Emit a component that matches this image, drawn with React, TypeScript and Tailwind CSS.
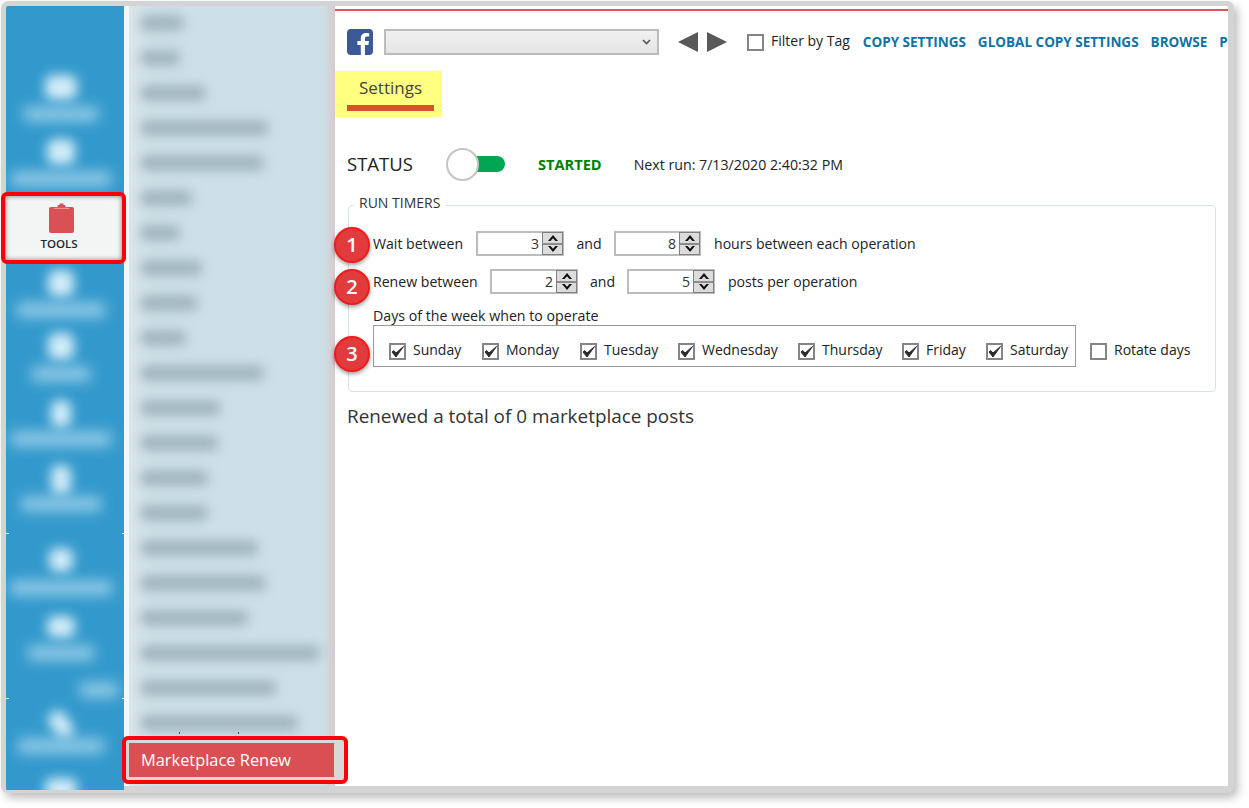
import React from "react";

const railTop = [
  { icon: "w-[32px] h-[25px]", label: "w-[74px]", top: "mt-[69px]", labelGap: "mt-[10px]" },
  { icon: "w-[28px] h-[26px]", label: "w-[100px]", top: "mt-[21px]", labelGap: "mt-[10px]" },
];
const railBelow = [
  { icon: "w-[26px] h-[27px]", label: "w-[88px]", top: "mt-[10px]", labelGap: "mt-[9px]" },
  { icon: "w-[26px] h-[27px]", label: "w-[58px]", top: "mt-[19px]", labelGap: "mt-[10px]" },
  { icon: "w-[20px] h-[28px]", label: "w-[100px]", top: "mt-[22px]", labelGap: "mt-[7px]" },
  { icon: "w-[20px] h-[30px]", label: "w-[80px]", top: "mt-[22px]", labelGap: "mt-[5px]" },
  { icon: "w-[24px] h-[24px]", label: "w-[102px]", top: "mt-[40px]", labelGap: "mt-[12px]" },
  { icon: "w-[28px] h-[22px]", label: "w-[66px]", top: "mt-[24px]", labelGap: "mt-[11px]" },
];

const listRows = [
  "w-[42px]", "w-[38px]", "w-[64px]", "w-[126px]", "w-[122px]", "w-[50px]", "w-[38px]",
  "w-[60px]", "w-[56px]", "w-[44px]", "w-[122px]", "w-[78px]", "w-[76px]", "w-[66px]",
  "w-[66px]", "w-[116px]", "w-[124px]", "w-[106px]", "w-[178px]", "w-[134px]", "w-[156px]",
];

const days = [
  { name: "Sunday", w: "w-[93px]" },
  { name: "Monday", w: "w-[98px]" },
  { name: "Tuesday", w: "w-[98px]" },
  { name: "Wednesday", w: "w-[120px]" },
  { name: "Thursday", w: "w-[104px]" },
  { name: "Friday", w: "w-[84px]" },
  { name: "Saturday", w: "w-[90px]" },
];

// blurred-out icon and caption on the rail
function RailIcon({ size }: { size: string }) {
  return <div className={`${size} bg-[#d2ecf8] rounded-lg blur-[6px]`} />;
}

function RailLabel({ size }: { size: string }) {
  return (
    <div className={`${size} h-[8px] flex items-center`}>
      <div className="w-full h-[14px] shrink-0 bg-[#95cde8] blur-[7px]" />
    </div>
  );
}

function CheckBox({ checked = false }: { checked?: boolean }) {
  return (
    <span className="w-[17px] h-[17px] border-2 border-[#858585] bg-white flex items-center justify-center shrink-0">
      {checked && (
        <svg width="13" height="13" viewBox="0 0 13 13">
          <path d="M1 7 L5 12 L12.5 1.5 L5 8 L2.8 5.6 Z" fill="#2b2b2b" stroke="#2b2b2b" strokeWidth="1" strokeLinejoin="round" />
        </svg>
      )}
    </span>
  );
}

function Spinner({ value, width }: { value: number; width: string }) {
  return (
    <div className={`${width} h-[25px] border-2 border-[#bcbcbc] bg-white flex items-stretch shrink-0`}>
      <span className="flex-1 text-right pr-[3px] leading-[21px] text-[14.1px] text-[#333]">{value}</span>
      <div className="w-[21px] -my-[1px] -mr-[1px] flex flex-col border border-[#808080] bg-[#dcdcdc]">
        <div className="flex-1 flex items-center justify-center border-b-2 border-[#8c8c8c]">
          <svg width="10" height="6" viewBox="0 0 10 6"><path d="M5 0 L10 6 L7.4 6 L5 3.2 L2.6 6 L0 6 Z" fill="#111" /></svg>
        </div>
        <div className="flex-1 flex items-center justify-center">
          <svg width="10" height="6" viewBox="0 0 10 6"><path d="M5 6 L10 0 L7.4 0 L5 2.8 L2.6 0 L0 0 Z" fill="#111" /></svg>
        </div>
      </div>
    </div>
  );
}

function Badge({ n, className }: { n: number; className: string }) {
  return (
    <div className={`absolute ${className} w-[36px] h-[36px] rounded-full bg-[#e23b3d] border-2 border-[#f01c1c] text-white text-[20px] font-semibold flex items-center justify-center shadow-[0_2px_4px_rgba(0,0,0,0.4)]`}>
      {n}
    </div>
  );
}

export default function App() {
  return (
    <div className="relative w-[1249px] h-[808px] bg-white overflow-hidden font-['Open_Sans','Liberation_Sans',sans-serif] text-[#222]">
      <div className="ml-[1px] mt-[1px] w-[1233px] h-[792px] border-t-[5px] border-l-[5px] border-r-[6px] border-[#d4d4d4] rounded-[7px] shadow-[4px_5px_8px_rgba(0,0,0,0.25)] flex items-start overflow-hidden bg-[#d4d4d4]">
        {/* left icon rail */}
        <div className="w-[118px] h-[784px] shrink-0 bg-[#3399cc] flex flex-col items-start overflow-hidden">
          {railTop.map((item, i) => (
            <div key={i} className={`${item.top} w-[110px] flex flex-col items-center shrink-0`}>
              <RailIcon size={item.icon} />
              <div className={item.labelGap} />
              <RailLabel size={item.label} />
            </div>
          ))}
          <div className="w-[118px] h-[65px] mt-[12px] pr-[8px] bg-[#f3f4f4] flex flex-col items-center shrink-0">
            <svg className="mt-[8px]" width="25" height="30" viewBox="0 0 26 31">
              <path d="M2 4 H9 V2 H11 V0.5 H15 V2 H17 V4 H24 Q26 4 26 6 V29 Q26 31 24 31 H2 Q0 31 0 29 V6 Q0 4 2 4 Z" fill="#d95055" />
              <path d="M5 5.5 H21" stroke="#eea0a2" strokeWidth="1" />
            </svg>
            <span className="mt-[3px] -ml-[4px] text-[11.5px] font-semibold leading-[16px] text-[#1c2733]">TOOLS</span>
          </div>
          {railBelow.map((item, i) => (
            <div key={i} className={`${item.top} w-[110px] flex flex-col items-center shrink-0`}>
              <RailIcon size={item.icon} />
              <div className={item.labelGap} />
              <RailLabel size={item.label} />
            </div>
          ))}
          <div className="mt-[29px] ml-[74px] shrink-0"><RailLabel size="w-[38px]" /></div>
          <div className="mt-[16px] w-[110px] flex flex-col items-center shrink-0">
            <div className="-rotate-[35deg]"><RailIcon size="w-[18px] h-[30px]" /></div>
            <div className="mt-[2px]" />
            <RailLabel size="w-[86px]" />
          </div>
          <div className="mt-[28px] w-[110px] flex justify-center shrink-0">
            <RailIcon size="w-[32px] h-[22px]" />
          </div>
        </div>

        {/* blurred sub menu */}
        <div className="w-[5px] h-[780px] shrink-0 bg-[#f4f6f7]" />
        <div className="w-[206px] h-[780px] shrink-0 bg-[linear-gradient(to_right,#dbe6eb,#cde0e7_12%,#cde0e7_94%,#d8c8d0)] flex flex-col pt-[10px] pl-[12px] overflow-hidden">
          {listRows.map((w, i) => (
            <div key={i} className="h-[35px] shrink-0">
              <div className={`${w} h-[14px] bg-[#9cb1b9] blur-[6px]`} />
            </div>
          ))}
        </div>

        {/* main panel */}
        <div className="flex-1 min-w-0 h-[780px] flex flex-col pt-[3px] bg-white overflow-hidden">
          <div className="h-[2px] bg-[#d9575a] shrink-0" />

          <div className="flex items-center h-[26px] mt-[18px] pl-[12px] shrink-0 whitespace-nowrap">
            <svg width="26" height="26" viewBox="0 0 26 26" className="shrink-0">
              <rect width="26" height="26" rx="4" fill="#3b5998" />
              <path d="M18 26 V16 H21.4 L22 12 H18 V9.6 C18 8.4 18.4 7.6 20 7.6 H22.2 V4.2 C21.6 4.1 20.4 4 19.2 4 C16 4 13.8 5.9 13.8 9.2 V12 H10.4 V16 H13.8 V26 Z" fill="#fff" />
            </svg>
            <div className="ml-[11px] w-[275px] h-[26px] border-2 border-[#bcbcbc] bg-gradient-to-b from-[#f0f0f0] to-[#e5e5e5] flex items-center justify-end pr-[6px]">
              <svg width="9" height="6" viewBox="0 0 9 6"><path d="M1 1 L4.5 4.5 L8 1" fill="none" stroke="#555" strokeWidth="1.6" /></svg>
            </div>
            <svg width="20" height="20" viewBox="0 0 20 20" className="ml-[19px]"><path d="M20 0 V20 L0 10 Z" fill="#595959" /></svg>
            <svg width="20" height="20" viewBox="0 0 20 20" className="ml-[9px]"><path d="M0 0 V20 L20 10 Z" fill="#595959" /></svg>
            <div className="ml-[20px]"><CheckBox /></div>
            <span className="ml-[7px] text-[14px] -mt-[4px]">Filter by Tag</span>
            <div className="ml-[13px] mt-[1px] flex gap-[12px] text-[13.5px] font-bold text-[#0f73a3]">
              <span>COPY SETTINGS</span>
              <span>GLOBAL COPY SETTINGS</span>
              <span>BROWSE</span>
              <span>P</span>
            </div>
          </div>

          <div className="mt-[16px] w-[107px] h-[46px] bg-[#ffff80] pl-[12px] pr-[8px] shrink-0">
            <div className="h-[40px] border-b-[6px] border-[#d9512c] text-center text-[17px] text-[#444] leading-[34px]">Settings</div>
          </div>

          <div className="flex items-center mt-[30px] h-[34px] pl-[12px] shrink-0 whitespace-nowrap">
            <span className="text-[18.5px] w-[99px]">STATUS</span>
            <div className="relative w-[60px] h-[34px] flex items-center">
              <div className="ml-[8px] w-[51px] h-[16px] rounded-full bg-[#00a651]" />
              <div className="absolute left-0 top-[1px] w-[33px] h-[33px] rounded-full bg-white border-2 border-[#c4c4c4]" />
            </div>
            <span className="ml-[32px] mt-[2px] text-[14.6px] font-bold text-[#008000]">STARTED</span>
            <span className="ml-[32px] mt-[2px] text-[14.2px]">Next run: 7/13/2020 2:40:32 PM</span>
          </div>

          <fieldset className="mt-[13px] ml-[13px] w-[868px] h-[198px] border border-[#d6e2ec] rounded-[4px] shrink-0 whitespace-nowrap">
            <legend className="ml-[5px] px-[5px] pb-[4px] text-[14px] leading-[18px] text-[#333]">RUN TIMERS</legend>
            <div className="pl-[24px]">
              <div className="flex items-center h-[25px] mt-[15px] text-[14.1px]">
                <span className="w-[103px]">Wait between</span>
                <Spinner value={3} width="w-[88px]" />
                <span className="w-[50px] text-center">and</span>
                <Spinner value={8} width="w-[87px]" />
                <span className="ml-[13px]">hours between each operation</span>
              </div>
              <div className="flex items-center h-[25px] mt-[13px] text-[14.1px]">
                <span className="w-[117px]">Renew between</span>
                <Spinner value={2} width="w-[88px]" />
                <span className="w-[49px] text-center">and</span>
                <Spinner value={5} width="w-[88px]" />
                <span className="ml-[13px]">posts per operation</span>
              </div>
              <div className="mt-[13px] text-[14.2px] leading-[18px]">Days of the week when to operate</div>
              <div className="flex items-center">
                <div className="w-[703px] h-[42px] border border-[#999] flex items-center pl-[15px] pt-[11px] text-[14px]">
                  {days.map((d) => (
                    <div key={d.name} className={`${d.w} flex items-center gap-[7px] shrink-0`}>
                      <CheckBox checked />
                      <span className="-mt-[5px]">{d.name}</span>
                    </div>
                  ))}
                </div>
                <div className="ml-[14px] pt-[11px] flex items-center gap-[7px] text-[14px]">
                  <CheckBox />
                  <span className="-mt-[5px]">Rotate days</span>
                </div>
              </div>
            </div>
          </fieldset>

          <div className="mt-[12px] ml-[12px] text-[18.9px] leading-[24px] text-[#333]">Renewed a total of 0 marketplace posts</div>
        </div>
      </div>

      {/* small splitter ticks left on the rail and list */}
      <div className="absolute left-[6px] top-[533px] w-[3px] h-px bg-white" />
      <div className="absolute left-[122px] top-[533px] w-[3px] h-px bg-white" />
      <div className="absolute left-[6px] top-[698px] w-[3px] h-px bg-white" />
      <div className="absolute left-[122px] top-[698px] w-[3px] h-px bg-white" />
      <div className="absolute left-[179px] top-[732px] w-px h-[2px] bg-[#555]" />
      <div className="absolute left-[238px] top-[732px] w-px h-[2px] bg-[#555]" />

      {/* red callouts drawn over the app */}
      <div className="absolute left-[1px] top-[192px] w-[125px] h-[72px] border-[4px] border-[#fb0007] rounded-[6px] shadow-[inset_0_0_5px_rgba(0,0,0,0.5)]" />
      <div className="absolute left-[122px] top-[736px] w-[226px] h-[48px] border-[4px] border-[#fb0007] rounded-[6px] p-[3px] bg-[#d8d8d8]">
        <div className="w-[205px] h-[34px] bg-[#d94f54] text-white text-[16.4px] leading-[33px] pl-[12px]">Marketplace Renew</div>
      </div>
      <Badge n={1} className="left-[334px] top-[227px]" />
      <Badge n={2} className="left-[334px] top-[269px]" />
      <Badge n={3} className="left-[334px] top-[336px]" />
    </div>
  );
}
